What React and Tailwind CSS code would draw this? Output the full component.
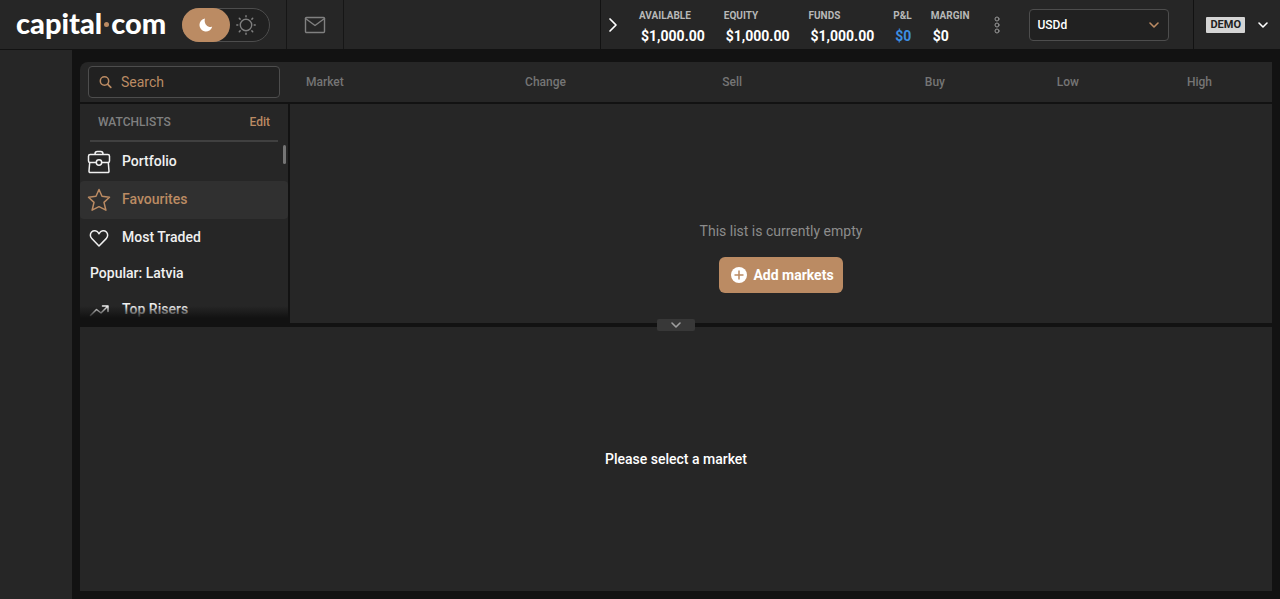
import React from 'react';

const accountStats = [
  { label: 'AVAILABLE', value: '$1,000.00', tone: 'text-white' },
  { label: 'EQUITY', value: '$1,000.00', tone: 'text-white' },
  { label: 'FUNDS', value: '$1,000.00', tone: 'text-white' },
  { label: 'P&L', value: '$0', tone: 'text-[#3c8ee2]' },
  { label: 'MARGIN', value: '$0', tone: 'text-white' },
];

function Icon({ width, height, children, className = '' }) {
  return (
    <svg
      width={width}
      height={height}
      viewBox={`0 0 ${width} ${height}`}
      fill="none"
      stroke="currentColor"
      strokeLinecap="round"
      strokeLinejoin="round"
      aria-hidden="true"
      className={`shrink-0 ${className}`}
    >
      {children}
    </svg>
  );
}

function ChevronDown({ className }) {
  return (
    <Icon width={12} height={8} className={className}>
      <path d="M2 2l4 4 4-4" strokeWidth="1.6" />
    </Icon>
  );
}

function BriefcaseIcon() {
  return (
    <Icon width={24} height={24}>
      <path
        d="M8 4.5V4c0-1.6.9-2.5 2.3-2.5h3.4C15.1 1.5 16 2.4 16 4v.5M3.2 4.500h17.600c1 0 1.700.7 1.700 1.700V11c0 1-.7 1.500-1.500 1.500h-6M9 12.500H3c-.8 0-1.500-.5-1.500-1.500V6.200c0-1 .7-1.700 1.700-1.700M2.700 12.500L2 21c-.1 1 .5 1.500 1.300 1.500h17.400c.8 0 1.400-.5 1.300-1.500l-.7-8.500"
        strokeWidth="1.5"
      />
      <circle cx="12" cy="12.500" r="2.700" strokeWidth="1.5" />
    </Icon>
  );
}

function StarIcon() {
  return (
    <Icon width={24} height={24}>
      <path
        d="M12 1.500l3 6.800 7.500.9-5.500 5.200 1.900 7.800L12 18.700l-6.900 3.500L7 14.400 1.500 9.200 9 8.300z"
        strokeWidth="1.5"
      />
    </Icon>
  );
}

function HeartIcon() {
  return (
    <Icon width={24} height={24}>
      <path
        d="M12 20L4.800 12.600C2.900 10.700 2.900 7.700 4.600 6c2-1.900 5.200-1.600 6.700.7l.7 1 .7-1c1.500-2.300 4.700-2.600 6.700-.7 1.700 1.700 1.700 4.700-.2 6.600z"
        strokeWidth="1.5"
      />
    </Icon>
  );
}

function RisingIcon() {
  return (
    <Icon width={24} height={24}>
      <path d="M3.500 17.500l6-6 4.500 3.500 7-7M15.500 8H21v5.500" strokeWidth="1.5" />
    </Icon>
  );
}

function TopBar() {
  return (
    <header className="flex h-[50px] shrink-0 items-stretch border-b border-[#121212] bg-[#262626]">
      <div className="flex items-center gap-4 px-4">
        <a
          href="#home"
          aria-label="capital.com"
          className="flex w-[150px] items-center pb-1 font-[Lato,sans-serif] text-[29px] leading-8 font-black text-white"
        >
          capital
          <span className="mx-0.5 mt-1 size-[5px] shrink-0 rounded-full bg-[#bb8b63]" />
          com
        </a>
        <div className="flex h-[34px] w-[88px] items-center rounded-full border border-[#4d4d4d] bg-[#212121]">
          <button
            type="button"
            aria-label="Dark theme"
            aria-pressed="true"
            className="-m-px flex h-[34px] w-12 items-center justify-center rounded-full bg-[#bb8b63] text-white"
          >
            <svg width="14" height="14" viewBox="0 0 14 14" fill="currentColor" aria-hidden="true">
              <path d="M6 .6C4.600 4.800 7.800 9.800 13.200 8.800A6.500 6.500 0 1 1 6 .6z" />
            </svg>
          </button>
          <button
            type="button"
            aria-label="Light theme"
            aria-pressed="false"
            className="flex flex-1 items-center pl-[7px] text-[#808080]"
          >
            <Icon width={20} height={20}>
              <circle cx="10" cy="10" r="5.700" strokeWidth="1.4" />
              <path
                d="M10 .8v1M10 18.200v1M.8 10h1M18.200 10h1M3.300 3.300l.8.8M15.900 15.900l.8.8M3.300 16.700l.8-.8M15.900 4.100l.8-.8"
                strokeWidth="1.5"
              />
            </Icon>
          </button>
        </div>
      </div>
      <button
        type="button"
        aria-label="Messages"
        className="flex w-[58px] items-center justify-center border-x border-[#161616] text-[#808080]"
      >
        <Icon width={22} height={18}>
          <rect x="1.500" y="1.500" width="19" height="15" rx="1" strokeWidth="1.400" />
          <path d="M1.500 2.500L11 9.500l9.500-7" strokeWidth="1.400" />
        </Icon>
      </button>

      <div className="ml-auto flex items-center border-l border-[#121212] pr-6 pl-1">
        <button type="button" aria-label="Collapse balance" className="flex w-4 justify-center text-white">
          <Icon width={10} height={16}>
            <path d="M2 2l6 6-6 6" strokeWidth="1.700" />
          </Icon>
        </button>
        <dl className="ml-[18px] flex gap-[19px]">
          {accountStats.map((stat) => (
            <div key={stat.label}>
              <dt className="pt-1 text-[10px] leading-4 font-bold text-[#b8b8b8]">{stat.label}</dt>
              <dd className={`mt-0.5 pl-0.5 text-sm leading-5 font-bold ${stat.tone}`}>{stat.value}</dd>
            </div>
          ))}
        </dl>
        <button type="button" aria-label="More" className="ml-6 flex w-2 justify-center text-[#999999]">
          <Icon width={6} height={18}>
            <circle cx="3" cy="3" r="2" />
            <circle cx="3" cy="9" r="2" />
            <circle cx="3" cy="15" r="2" />
          </Icon>
        </button>
        <div className="relative ml-7">
          <select
            aria-label="Account currency"
            className="block h-8 w-[140px] appearance-none rounded border border-[#4d4d4d] bg-[#212121] px-[7px] text-xs font-medium text-white"
          >
            <option>USDd</option>
          </select>
          <ChevronDown className="pointer-events-none absolute top-3 right-[9px] text-[#bb8b63]" />
        </div>
      </div>
      <button
        type="button"
        className="flex items-center gap-3 border-l border-[#121212] pr-[11px] pl-3 text-white"
      >
        <span className="rounded-[1px] bg-[#d5d5d5] px-1 pb-px text-[11px] leading-[15px] font-bold text-[#212121]">
          DEMO
        </span>
        <ChevronDown />
      </button>
    </header>
  );
}

function WatchlistItem({ icon, label, active = false }) {
  return (
    <li>
      <a
        href="#watchlist"
        aria-current={active ? 'page' : undefined}
        className={`flex h-[38px] items-center gap-[11px] rounded-sm pl-[7px] ${
          active ? 'bg-[#303030] text-[#bb8b63]' : 'text-[#f0f0f0]'
        }`}
      >
        {icon}
        <span className="pb-0.5">{label}</span>
      </a>
    </li>
  );
}

function Watchlists() {
  return (
    <nav aria-label="Watchlists" className="flex w-52 shrink-0 flex-col bg-[#121212]">
      <div className="bg-[#262626] px-2.5">
        <div className="flex h-[38px] items-center justify-between border-b-2 border-[#404040] px-2 text-xs font-medium">
          <h2 className="text-[#808080]">WATCHLISTS</h2>
          <button type="button" className="text-[#bb8b63]">
            Edit
          </button>
        </div>
      </div>
      <div className="relative h-44 overflow-hidden bg-[#262626] pt-px text-sm font-medium">
        <ul>
          <WatchlistItem icon={<BriefcaseIcon />} label="Portfolio" />
          <WatchlistItem icon={<StarIcon />} label="Favourites" active />
          <WatchlistItem icon={<HeartIcon />} label="Most Traded" />
          <li className="flex h-[34px] items-center px-2.5 pb-0.5 text-[#f0f0f0]">Popular: Latvia</li>
          <WatchlistItem icon={<RisingIcon />} label="Top Risers" />
        </ul>
        <div className="absolute top-[3px] right-0.5 h-[19px] w-[3px] rounded-sm bg-[#757575]" />
        <div className="absolute inset-x-0 bottom-0 h-3 bg-linear-to-b from-transparent to-[#121212]" />
      </div>
    </nav>
  );
}

function MarketHeader() {
  return (
    <div className="flex h-10 shrink-0 items-center rounded-tl-lg bg-[#262626]">
      <div className="w-[210px] shrink-0 px-2">
        <label className="flex h-8 w-48 items-center gap-2 rounded-sm border border-[#4d4d4d] bg-[#212121] px-2.5 text-[#bb8b63]">
          <Icon width={14} height={14}>
            <circle cx="5.500" cy="6" r="4.200" strokeWidth="1.500" />
            <path d="M8.800 9.300l3 3" strokeWidth="1.700" />
          </Icon>
          <input
            type="search"
            aria-label="Search"
            placeholder="Search"
            className="w-full min-w-0 bg-transparent text-sm outline-none placeholder:text-[#bb8b63]"
          />
        </label>
      </div>
      <table className="w-full min-w-0 table-fixed text-right text-xs text-[#757575] [&_th]:font-medium">
        <thead>
          <tr>
            <th scope="col" className="pl-4 text-left">
              Market
            </th>
            <th scope="col" className="w-[15%]">Change</th>
            <th scope="col" className="w-44">Sell</th>
            <th scope="col" className="w-[203px]">Buy</th>
            <th scope="col" className="w-[134px]">Low</th>
            <th scope="col" className="w-[193px] pr-[60px]">High</th>
          </tr>
        </thead>
      </table>
    </div>
  );
}

export default function App() {
  return (
    <div className="flex min-h-screen flex-col bg-[#121212] font-[Roboto,sans-serif] text-white">
      <TopBar />
      <div className="flex flex-1">
        <aside className="w-[72px] shrink-0 bg-[#262626]" />
        <main className="flex min-w-0 flex-1 flex-col px-2 pt-3 pb-2">
          <MarketHeader />
          <div className="mt-0.5 flex gap-0.5">
            <Watchlists />
            <section className="flex h-[219px] min-w-0 flex-1 flex-col items-center bg-[#262626] pt-[117px]">
              <p className="text-sm leading-5 text-[#8c8c8c]">This list is currently empty</p>
              <button
                type="button"
                className="mt-4 flex h-9 items-center gap-1.5 rounded-md bg-[#bb8b63] pr-[9px] pl-3 text-sm font-bold text-white"
              >
                <svg width="16" height="16" viewBox="0 0 16 16" aria-hidden="true">
                  <circle cx="8" cy="8" r="8" fill="currentColor" />
                  <path d="M8 3.500v9M3.500 8h9" stroke="#bb8b63" strokeWidth="1.500" />
                </svg>
                Add markets
              </button>
            </section>
          </div>
          <div className="relative h-1 shrink-0">
            <button
              type="button"
              aria-label="Collapse market list"
              className="absolute -top-1 left-1/2 flex h-3 w-[38px] -translate-x-1/2 items-center justify-center rounded-xs bg-[#383838] text-[#a0a0a0]"
            >
              <ChevronDown />
            </button>
          </div>
          <section className="flex min-h-20 flex-1 items-center justify-center bg-[#262626] text-sm font-medium">
            Please select a market
          </section>
        </main>
      </div>
    </div>
  );
}
